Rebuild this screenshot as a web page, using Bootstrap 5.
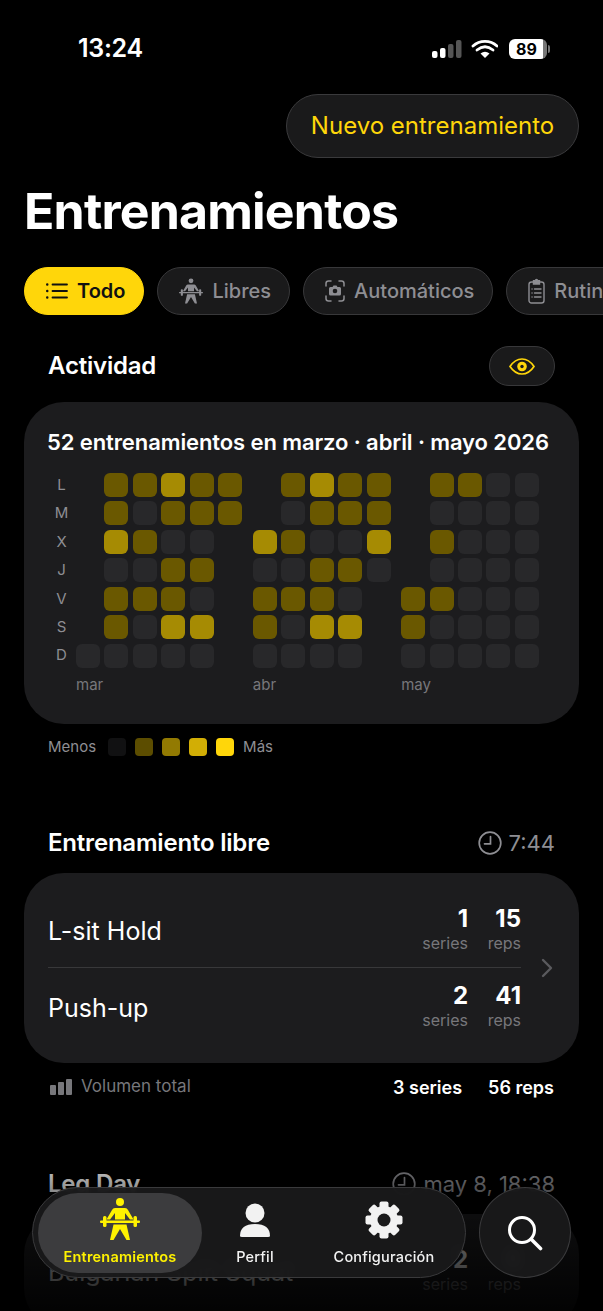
<!DOCTYPE html>
<html lang="es">

<head>
  <meta charset="UTF-8">
  <meta name="viewport" content="width=device-width, initial-scale=1.0">
  <title>Entrenamientos</title>
  <link href="https://cdn.jsdelivr.net/npm/bootstrap@5.3.0/dist/css/bootstrap.min.css" rel="stylesheet">
  <style>
    html { background: #000; }
    body { background: #000; color: #fff; font-family: Inter, "Liberation Sans", sans-serif; width: 603px; height: 1311px; overflow: hidden; position: relative; }
    .status-bar { height: 94px; padding: 4px 0 0 78px; }
    .clock { font-size: 25px; font-weight: 600; letter-spacing: -0.3px; }
    .status-icons { position: absolute; top: 39px; left: 432px; width: 120px; height: 20px; }
    .batt { position: absolute; left: 77px; top: 0; width: 38px; height: 20px; border-radius: 6px; background: linear-gradient(90deg, #fff 90%, #777 90%); color: #000; font-size: 16px; font-weight: 700; line-height: 20px; text-align: center; padding-right: 3px; }
    .batt-nub { position: absolute; left: 116px; top: 6px; width: 2px; height: 8px; border-radius: 0 2px 2px 0; background: #777; }
    .new-btn { height: 64px; width: 293px; margin-right: 24px; padding: 0; background: #1a1a1b; border: 1px solid #3a3a3c; color: #ffd60a; font-size: 24px; }
    .page-title { font-size: 50px; font-weight: 700; line-height: 60px; margin: 23px 0 0 24px; letter-spacing: -0.8px; }
    .chips { margin: 25px 0 0 24px; gap: 13px; width: 579px; overflow: hidden; height: 49px; }
    .chip { height: 48px; flex-shrink: 0; padding: 0 18px 0 21px; gap: 9px; background: #1a1a1b; border: 1px solid #38383a; color: #8e8e93; font-size: 20px; font-weight: 500; }
    .chip svg { flex-shrink: 0; }
    .chip-on { background: #ffd60a; border-color: #ffd60a; color: #111; font-weight: 600; }
    .sec-head { padding: 0 48px; height: 30px; }
    .sec-title { font-size: 24px; font-weight: 600; letter-spacing: -0.2px; }
    .eye-btn { width: 66px; height: 40px; background: #1a1a1b; border: 1px solid #38383a; }
    .sec-activity { margin-top: 31px; height: 40px; }
    .panel { margin: 16px 24px 0; border-radius: 40px; background: #1c1c1e; }
    .panel-heat { height: 322px; padding: 26px 0 0 23px; }
    .heat-title { font-size: 22px; font-weight: 600; line-height: 28px; white-space: nowrap; letter-spacing: -0.1px; }
    .heat { margin-top: 17px; }
    .heat-days { width: 29px; margin-right: 0; }
    .heat-day { height: 24px; margin-bottom: 4.4px; line-height: 24px; font-size: 15px; color: #8e8e93; text-align: center; }
    .heat-month { margin-right: 10.6px; }
    .heat-grid { display: grid; grid-template-rows: repeat(7, 24px); grid-auto-flow: row; gap: 4.45px; }
    .heat-grid-6 { grid-template-columns: repeat(6, 24px); }
    .heat-grid-5 { grid-template-columns: repeat(5, 24px); }
    .cell { border-radius: 6px; }
    .lv1 { background: #28282a; }
    .lv2 { background: #6a5800; }
    .lv3 { background: #a68b03; }
    .month-label { font-size: 15px; color: #77777b; margin-top: 5px; line-height: 24px; }
    .legend { margin: 14px 0 0 48px; height: 18px; font-size: 15px; color: #8e8e93; }
    .swatch { width: 18px; height: 18px; border-radius: 4px; margin-right: 9px; }
    .swatch-0 { background: #111112; }
    .swatch-1 { background: #5c4d00; }
    .swatch-2 { background: #927a02; }
    .swatch-3 { background: #d2ae05; }
    .swatch-4 { background: #ffd60a; }
    .sec-free { margin-top: 72px; }
    .sec-leg { margin-top: 70px; }
    .sec-time { color: #8e8e93; font-size: 22px; gap: 7px; }
    .panel-list { margin-top: 15px; padding: 18px 58px 20px 24px; position: relative; }
    .ex-row { height: 76px; }
    .ex-row + .ex-row { border-top: 1px solid #38383a; }
    .ex-name { font-size: 25px; padding-top: 6px; }
    .ex-stat { text-align: right; line-height: 1; }
    .ex-series { width: 60px; }
    .ex-reps { width: 53px; }
    .ex-num { font-size: 24px; font-weight: 700; line-height: 28px; }
    .ex-lbl { font-size: 16px; color: #77777b; line-height: 20px; }
    .ex-chevron { position: absolute; right: 26px; top: 85px; }
    .volume { margin: 12px 0 0; padding: 0 49px 0 50px; height: 24px; }
    .vol-label { font-size: 17px; color: #77777b; margin-left: 9px; }
    .vol-total { font-size: 18px; font-weight: 600; gap: 26px; }
    .fade-bottom { position: absolute; left: 0; right: 0; top: 1140px; bottom: 0; background: linear-gradient(180deg, rgba(0,0,0,0) 0%, rgba(0,0,0,.45) 30%, rgba(0,0,0,.9) 100%); }
    .tabbar { position: absolute; left: 32px; top: 1187px; width: 434px; height: 91px; padding: 5px; background: rgba(26,26,27,.93); border: 1px solid #3a3a3c; backdrop-filter: blur(5px); }
    .tab { height: 80px; font-size: 14.5px; font-weight: 500; letter-spacing: .2px; color: #f2f2f2; padding-bottom: 0; white-space: nowrap; }
    .tab-on { width: 164px; background: #3c3c3e; color: #fff200; font-weight: 600; }
    .tab-perfil { width: 106px; }
    .tab-config { width: 152px; }
    .tab-ico { height: 44px; margin-bottom: 5px; }
    .search-btn { position: absolute; left: 479px; top: 1187px; width: 92px; height: 91px; background: rgba(26,26,27,.93); border: 1px solid #3a3a3c; backdrop-filter: blur(5px); }
  </style>
</head>

<body>
  <svg width="0" height="0" class="position-absolute">
    <symbol id="lifter" viewBox="0 0 40 42">
      <circle cx="20" cy="4" r="4" />
      <path d="M15 10H25Q27 10 28 12L33.500 21.500H30L25 15V21.500H15V15L10 21.500H6.500L12 12Q13 10 15 10Z" />
      <rect x="0" y="22.500" width="40" height="2.400" rx="1" />
      <rect x="3" y="18" width="3.500" height="11" rx="1.500" />
      <rect x="33.500" y="18" width="3.500" height="11" rx="1.500" />
      <path d="M13.500 26.500H26.500L30 42H26.500L20 31L13.500 42H10Z" />
    </symbol>
    <symbol id="clock-ico" viewBox="0 0 24 24">
      <circle cx="12" cy="12" r="10.800" fill="none" stroke="currentColor" stroke-width="1.700" />
      <path d="M12.500 5.500V12.800H6.500" fill="none" stroke="currentColor" stroke-width="1.700" stroke-linecap="round" />
    </symbol>
  </svg>

  <div class="status-bar d-flex align-items-center"><span class="clock">13:24</span></div>
  <div class="status-icons">
    <svg width="66" height="20" viewBox="0 0 66 20" class="d-block">
      <rect x="0" y="12" width="5.500" height="7" rx="2" fill="#fff" />
      <rect x="8" y="9" width="5.500" height="10" rx="2" fill="#fff" />
      <rect x="16" y="5" width="5.500" height="14" rx="2" fill="#555" />
      <rect x="24" y="1" width="5.500" height="18" rx="2" fill="#555" />
      <path d="M41 5.500Q46 .8 53 .8T65 5.500" transform="translate(0 1.500)" fill="none" stroke="#fff" stroke-width="2.800" stroke-linecap="round" />
      <path d="M45 11Q53 4.500 61 11" transform="translate(0 0)" fill="none" stroke="#fff" stroke-width="2.800" stroke-linecap="round" />
      <path d="M53 19L48.500 14.500Q53 11 57.500 14.500Z" fill="#fff" />
    </svg>
    <div class="batt">89</div>
    <div class="batt-nub"></div>
  </div>

  <div class="d-flex justify-content-end">
    <button type="button" class="btn rounded-pill new-btn">Nuevo entrenamiento</button>
  </div>

  <h1 class="page-title">Entrenamientos</h1>

  <div class="chips d-flex align-items-center">
    <div class="chip chip-on d-flex align-items-center rounded-pill">
      <svg width="22" height="18" viewBox="0 0 22 18" fill="none" stroke="#111" stroke-width="1.800" stroke-linecap="round">
        <path d="M6.500 2.500H21M6.500 9H21M6.500 15.500H21" />
        <path d="M1.200 2.500h.1M1.200 9h.1M1.200 15.500h.1" stroke-width="2.400" />
      </svg>
      <span>Todo</span>
    </div>
    <div class="chip d-flex align-items-center rounded-pill">
      <svg width="24" height="26" fill="#8e8e93"><use href="#lifter" /></svg>
      <span>Libres</span>
    </div>
    <div class="chip d-flex align-items-center rounded-pill">
      <svg width="20" height="22" viewBox="0 0 20 22" fill="none" stroke="#8e8e93" stroke-width="1.500" stroke-linecap="round">
        <path d="M1 6V3.500Q1 1 3.500 1H6M14 1H16.500Q19 1 19 3.500V6M19 16V18.500Q19 21 16.500 21H14M6 21H3.500Q1 21 1 18.500V16" />
        <path d="M4 8.500Q4 7 5.500 7H7.500L8.500 5.500H11.500L12.500 7H14.500Q16 7 16 8.500V14Q16 15.500 14.500 15.500H5.500Q4 15.500 4 14Z" fill="#8e8e93" stroke="none" />
        <circle cx="10" cy="11" r="2.300" fill="#1a1a1b" stroke="none" />
      </svg>
      <span>Automáticos</span>
    </div>
    <div class="chip d-flex align-items-center rounded-pill">
      <svg width="17" height="26" viewBox="0 0 17 26" fill="none" stroke="#8e8e93" stroke-width="1.400" stroke-linecap="round">
        <rect x="1" y="4" width="15" height="21" rx="2.500" />
        <path d="M5.500 4V2.800H7Q8.500 0 10 2.800H11.500V6H5.500Z" fill="#8e8e93" />
        <path d="M6.500 11H13M6.500 15H13M6.500 19H13M4 11h.1M4 15h.1M4 19h.1" />
      </svg>
      <span>Rutinas</span>
    </div>
  </div>

  <div class="sec-head sec-activity d-flex justify-content-between align-items-center">
    <span class="sec-title">Actividad</span>
    <div class="eye-btn rounded-pill d-flex align-items-center justify-content-center">
      <svg width="26" height="17" viewBox="0 0 26 17">
        <path d="M1 8.500Q6 1 13 1T25 8.500Q20 16 13 16T1 8.500Z" fill="none" stroke="#ffd60a" stroke-width="1.700" />
        <circle cx="13" cy="8.500" r="4.800" fill="#ffd60a" />
        <circle cx="13" cy="8.500" r="1.700" fill="#1a1a1b" />
      </svg>
    </div>
  </div>

  <div class="panel panel-heat">
    <div class="heat-title">52 entrenamientos en marzo · abril · mayo 2026</div>
    <div class="heat d-flex" id="heat"></div>
  </div>

  <div class="legend d-flex align-items-center">
    <span class="me-2 pe-1">Menos</span>
    <div class="swatch swatch-0"></div>
    <div class="swatch swatch-1"></div>
    <div class="swatch swatch-2"></div>
    <div class="swatch swatch-3"></div>
    <div class="swatch swatch-4"></div>
    <span>Más</span>
  </div>

  <div class="sec-head sec-free d-flex justify-content-between align-items-center">
    <span class="sec-title">Entrenamiento libre</span>
    <span class="sec-time d-flex align-items-center"><svg width="24" height="24"><use href="#clock-ico" /></svg>7:44</span>
  </div>
  <div class="panel panel-list">
    <div class="ex-row d-flex align-items-center justify-content-between">
      <span class="ex-name">L-sit Hold</span>
      <div class="d-flex">
        <div class="ex-stat ex-series"><div class="ex-num">1</div><div class="ex-lbl">series</div></div>
        <div class="ex-stat ex-reps"><div class="ex-num">15</div><div class="ex-lbl">reps</div></div>
      </div>
    </div>
    <div class="ex-row d-flex align-items-center justify-content-between">
      <span class="ex-name">Push-up</span>
      <div class="d-flex">
        <div class="ex-stat ex-series"><div class="ex-num">2</div><div class="ex-lbl">series</div></div>
        <div class="ex-stat ex-reps"><div class="ex-num">41</div><div class="ex-lbl">reps</div></div>
      </div>
    </div>
    <svg class="ex-chevron" width="12" height="20" viewBox="0 0 12 20" fill="none" stroke="#5a5a5e" stroke-width="2.400" stroke-linecap="round" stroke-linejoin="round"><path d="M2 2L10 10L2 18" /></svg>
  </div>
  <div class="volume d-flex align-items-center justify-content-between">
    <div class="d-flex align-items-center">
      <svg width="22" height="16" viewBox="0 0 22 16" fill="#77777b">
        <rect x="0" y="6" width="6" height="10" rx="1" />
        <rect x="8" y="3" width="6" height="13" rx="1" />
        <rect x="16" y="0" width="6" height="16" rx="1" />
      </svg>
      <span class="vol-label">Volumen total</span>
    </div>
    <div class="vol-total d-flex"><span>3 series</span><span>56 reps</span></div>
  </div>

  <div class="sec-head sec-leg d-flex justify-content-between align-items-center">
    <span class="sec-title">Leg Day</span>
    <span class="sec-time d-flex align-items-center"><svg width="24" height="24"><use href="#clock-ico" /></svg>may 8, 18:38</span>
  </div>
  <div class="panel panel-list">
    <div class="ex-row d-flex align-items-center justify-content-between">
      <span class="ex-name">Bulgarian Split Squat</span>
      <div class="d-flex">
        <div class="ex-stat ex-series"><div class="ex-num">2</div><div class="ex-lbl">series</div></div>
        <div class="ex-stat ex-reps"><div class="ex-num">6</div><div class="ex-lbl">reps</div></div>
      </div>
    </div>
  </div>

  <div class="fade-bottom"></div>

  <nav class="tabbar rounded-pill d-flex align-items-center">
    <div class="tab tab-on rounded-pill d-flex flex-column align-items-center justify-content-center">
      <svg class="tab-ico" width="40" height="42" fill="#fff200"><use href="#lifter" /></svg>
      <span>Entrenamientos</span>
    </div>
    <div class="tab tab-perfil d-flex flex-column align-items-center justify-content-center">
      <svg class="tab-ico" width="30" height="44" viewBox="0 0 30 44" fill="#f2f2f2">
        <circle cx="15" cy="16" r="9.500" />
        <path d="M0 39Q0 27 15 27T30 39Q30 40 28 40H2Q0 40 0 39Z" />
      </svg>
      <span>Perfil</span>
    </div>
    <div class="tab tab-config d-flex flex-column align-items-center justify-content-center">
      <svg class="tab-ico" width="38" height="44" viewBox="0 0 38 44">
        <g transform="translate(19 23)" fill="#f2f2f2">
          <circle r="14" />
          <g id="teeth">
            <rect x="-4.500" y="-18.500" width="9" height="37" rx="2" />
            <rect x="-4.500" y="-18.500" width="9" height="37" rx="2" transform="rotate(45)" />
            <rect x="-4.500" y="-18.500" width="9" height="37" rx="2" transform="rotate(90)" />
            <rect x="-4.500" y="-18.500" width="9" height="37" rx="2" transform="rotate(135)" />
          </g>
          <circle r="6.500" fill="#1a1a1b" />
        </g>
      </svg>
      <span>Configuración</span>
    </div>
  </nav>
  <div class="search-btn rounded-circle d-flex align-items-center justify-content-center">
    <svg width="36" height="36" viewBox="0 0 36 36" fill="none" stroke="#fff" stroke-linecap="round">
      <circle cx="15" cy="15" r="12.500" stroke-width="3" />
      <path d="M24.500 24.500L33.500 33.500" stroke-width="3.600" />
    </svg>
  </div>

  <script src="https://cdn.jsdelivr.net/npm/bootstrap@5.3.0/dist/js/bootstrap.bundle.min.js"></script>
  <script>
    // 0 = sin celda, 1 = vacio, 2 = poco, 3 = mucho
    const months = [
      { label: "mar", rows: ["022322", "021222", "032110", "011220", "022210", "021330", "111110"] },
      { label: "abr", rows: ["02322", "01222", "32113", "11221", "22210", "21330", "11110"] },
      { label: "may", rows: ["02211", "01111", "02111", "01111", "22111", "21111", "11111"] },
    ];
    const days = ["L", "M", "X", "J", "V", "S", "D"];

    const heat = document.getElementById("heat");
    let html = `<div class="heat-days">${days.map((d) => `<div class="heat-day">${d}</div>`).join("")}</div>`;
    months.forEach((month) => {
      const cells = month.rows.join("").split("").map((v) => `<div class="cell lv${v}"></div>`).join("");
      html += `<div class="heat-month"><div class="heat-grid heat-grid-${month.rows[0].length}">${cells}</div><div class="month-label">${month.label}</div></div>`;
    });
    heat.innerHTML = html;
  </script>
</body>

</html>
